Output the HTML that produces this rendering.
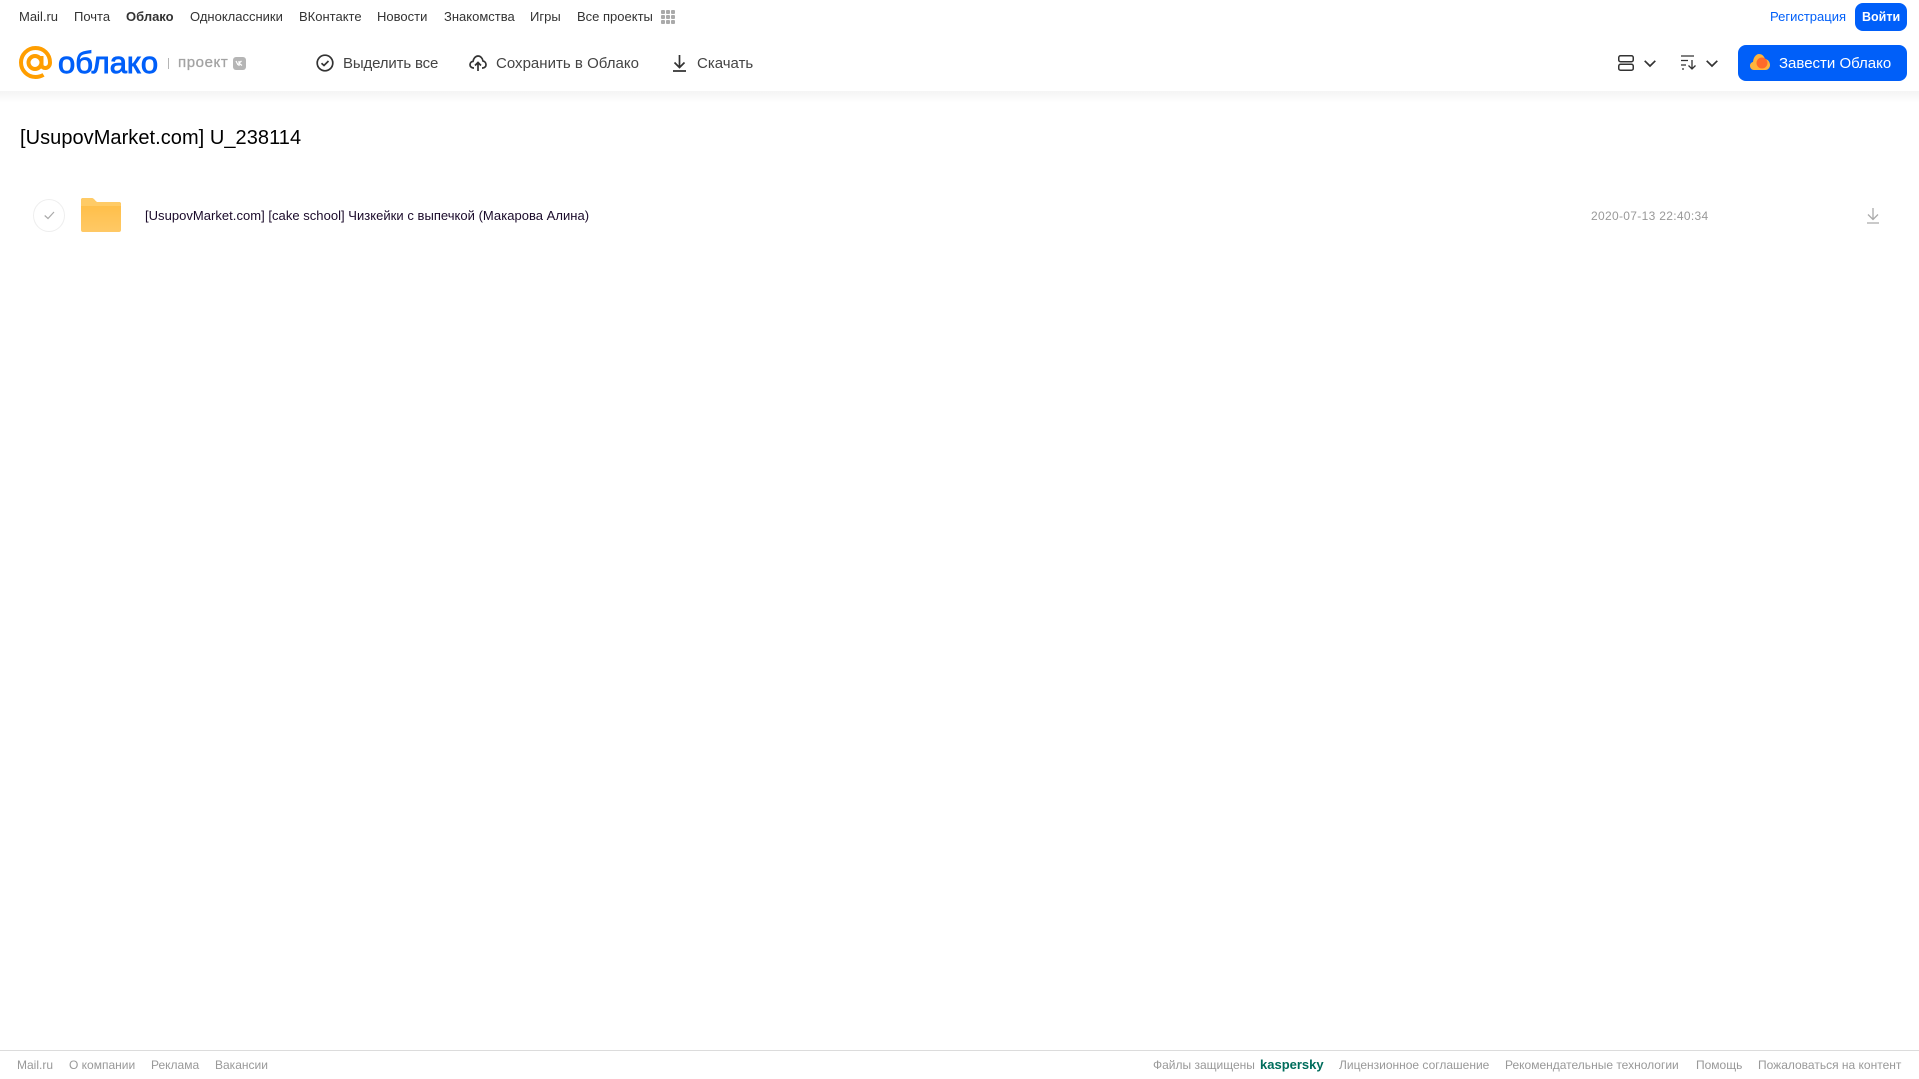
<!DOCTYPE html>
<html lang="ru"><head><meta charset="utf-8"><title>Облако</title>
<style>
html,body{margin:0;padding:0;background:#fff;width:1919px;height:1079px;overflow:hidden;font-family:"Liberation Sans",sans-serif}
.t{position:absolute;white-space:nowrap;line-height:1}
.n{font-size:13px;color:#333;top:10px}
.b{font-size:15px;color:#444;top:56px}
.f{font-size:12px;color:#999;top:1059px}
svg{position:absolute;overflow:visible}
</style></head><body>
<div style="position:absolute;left:0;top:91px;width:1919px;height:12px;background:linear-gradient(#f4f4f4,#fff)"></div>

<span class="t n" style="left:19px">Mail.ru</span>
<span class="t n" style="left:74px">Почта</span>
<span class="t n" style="left:126px;font-weight:bold">Облако</span>
<span class="t n" style="left:190px">Одноклассники</span>
<span class="t n" style="left:299px">ВКонтакте</span>
<span class="t n" style="left:377px">Новости</span>
<span class="t n" style="left:444px">Знакомства</span>
<span class="t n" style="left:530px">Игры</span>
<span class="t n" style="left:577px">Все проекты</span>
<svg style="left:661px;top:10px" width="14" height="14" fill="#aaa"><rect x="0" y="0" width="4" height="4" rx="1"/><rect x="5" y="0" width="4" height="4" rx="1"/><rect x="10" y="0" width="4" height="4" rx="1"/><rect x="0" y="5" width="4" height="4" rx="1"/><rect x="5" y="5" width="4" height="4" rx="1"/><rect x="10" y="5" width="4" height="4" rx="1"/><rect x="0" y="10" width="4" height="4" rx="1"/><rect x="5" y="10" width="4" height="4" rx="1"/><rect x="10" y="10" width="4" height="4" rx="1"/></svg>

<span class="t n" style="left:1770px;color:#005ff9">Регистрация</span>
<div style="position:absolute;left:1855px;top:3px;width:52px;height:28px;background:#005ff9;border-radius:8px"></div>
<span class="t n" style="left:1862px;top:10.500px;color:#fff;font-weight:bold;font-size:12.500px">Войти</span>

<svg style="left:19px;top:46px" width="33" height="33" viewBox="0 0 33 33" fill="none" stroke="#ff9e00" stroke-width="4"><circle cx="16" cy="16.500" r="6.500"/><path d="M22.500 10v8.500c0 5 8.500 5 8.500-2C31 8 24.500 2 16.500 2S2 8.500 2 16.500 8.500 31 16.500 31c3 0 5.500-.7 8-2.200"/></svg>
<span class="t" style="left:58px;top:47px;font-size:31px;color:#005ff9;-webkit-text-stroke:.9px #005ff9">облако</span>
<div style="position:absolute;left:168px;top:58px;width:1px;height:11px;background:#b5b5b5"></div>
<span class="t" style="left:178px;top:55px;font-size:15px;color:#a3a3a3;letter-spacing:.6px;-webkit-text-stroke:.3px #a3a3a3">проект</span>
<div style="position:absolute;left:233px;top:57px;width:13px;height:13px;background:#b5b5b5;border-radius:3px"></div>
<svg style="left:235px;top:60px" width="9" height="7" fill="none" stroke="#fff" stroke-width="1.200"><path d="M1 1l2 4M6.500 1L4 3.200 7 5.500M4 1v5"/></svg>

<svg style="left:316px;top:54px" width="18" height="18" viewBox="0 0 18 18" fill="none" stroke="#333" stroke-width="1.700"><circle cx="9" cy="9" r="7.800"/><path d="M5.500 9.200l2.500 2.300 4.500-4.500"/></svg>
<span class="t b" style="left:343px;letter-spacing:-.15px">Выделить все</span>

<svg style="left:469px;top:55px" width="18" height="17" viewBox="0 0 18 17" fill="none" stroke="#333" stroke-width="1.700"><path d="M5 13H4.500C2.500 13 1 11.500 1 9.700c0-1.700 1.300-3.100 3-3.300C4.500 3.500 6.500 1 9 1s4.500 2.200 5 5c1.700.3 3 1.900 3 3.700 0 1.800-1.400 3.300-3.300 3.300H13"/><path d="M9 16V8M6 10.500L9 7.500l3 3"/></svg>
<span class="t b" style="left:496px;letter-spacing:.02px">Сохранить в Облако</span>

<svg style="left:672px;top:54px" width="15" height="18" viewBox="0 0 15 18" fill="none" stroke="#333" stroke-width="1.700"><path d="M7.500 1v12M2.500 8.500l5 5 5-5M1 17h13"/></svg>
<span class="t b" style="left:697px">Скачать</span>

<svg style="left:1618px;top:55px" width="16" height="16" viewBox="0 0 16 16" fill="none" stroke="#333" stroke-width="1.500"><rect x=".750" y=".750" width="14.500" height="6" rx="1.800"/><rect x=".750" y="9.250" width="14.500" height="6" rx="1.800"/></svg>
<svg style="left:1644px;top:60px" width="12" height="7" fill="none" stroke="#333" stroke-width="1.700"><path d="M.700.800L6 6l5.300-5.200"/></svg>
<svg style="left:1681px;top:55px" width="16" height="15" viewBox="0 0 16 15" fill="none" stroke="#333" stroke-width="1.300"><path d="M0 1h13M0 5.500h7M0 10h5M1 14h2M11 5v9M7.500 10.500l3.500 3.500 3.500-3.500"/></svg>
<svg style="left:1706px;top:60px" width="12" height="7" fill="none" stroke="#333" stroke-width="1.700"><path d="M.700.800L6 6l5.300-5.200"/></svg>

<div style="position:absolute;left:1738px;top:45px;width:169px;height:36px;background:#005ff9;border-radius:8px"></div>
<svg style="left:1750px;top:54px" width="20" height="16" viewBox="0 0 20 16"><path d="M4 16C1.500 16 0 14 0 11.800 0 9.800 1.300 8.300 3 8 3.300 3.500 6 0 9 0c3 0 5 2 6 5 3 .4 5 3 5 6 0 2.800-2 5-4.500 5z" fill="#ffb43c"/><circle cx="12" cy="9" r="5.500" fill="#ff6a2a"/></svg>
<span class="t b" style="left:1779px;color:#fff">Завести Облако</span>

<span class="t" style="left:20px;top:128px;font-size:20px;color:#000;letter-spacing:.05px">[UsupovMarket.com] U_238114</span>

<div style="position:absolute;left:33px;top:199px;width:30px;height:31px;border:1px solid #eee;border-radius:50%"></div>
<svg style="left:44px;top:211px" width="11" height="9" fill="none" stroke="#aaa" stroke-width="1.200"><path d="M.700 4.500L4 7.500 10 1"/></svg>
<svg style="left:81px;top:198px" width="40" height="34" viewBox="0 0 40 34"><defs><linearGradient id="g" x1="0" y1="0" x2="0" y2="1"><stop offset="0" stop-color="#ffbc42"/><stop offset="1" stop-color="#ffc966"/></linearGradient></defs><path d="M2 0h8c2 0 3 1 4 2.200S15.500 4 17 4h21c1.200 0 2 .8 2 2v26c0 1.200-.8 2-2 2H2c-1.200 0-2-.8-2-2V2C0 .8.800 0 2 0z" fill="url(#g)"/><path d="M0 8h40V6c0-1.200-.8-2-2-2H17c-1.500 0-2-.6-3-1.800S12 0 10 0H2C.8 0 0 .8 0 2z" fill="#ffcb66"/></svg>
<span class="t" style="left:145px;top:209px;font-size:13px;color:#1a0a2a;letter-spacing:.03px">[UsupovMarket.com] [cake school] Чизкейки с выпечкой (Макарова Алина)</span>
<span class="t" style="left:1591px;top:209.500px;font-size:12px;color:#999;letter-spacing:.32px">2020-07-13 22:40:34</span>
<svg style="left:1866px;top:207px" width="14" height="17" viewBox="0 0 14 17" fill="none" stroke="#aaa" stroke-width="1.300"><path d="M7 1v11M2 7.500l5 5 5-5M1 16h12"/></svg>

<div style="position:absolute;left:0;top:1050px;width:1919px;height:1px;background:#dcdcdc"></div>
<span class="t f" style="left:17px">Mail.ru</span>
<span class="t f" style="left:69px">О компании</span>
<span class="t f" style="left:151px">Реклама</span>
<span class="t f" style="left:215px">Вакансии</span>
<span class="t f" style="left:1153px">Файлы защищены</span>
<span class="t f" style="left:1260px;color:#006d5c;font-weight:bold;font-size:13px;top:1058px">kaspersky</span>
<span class="t f" style="left:1339px">Лицензионное соглашение</span>
<span class="t f" style="left:1505px">Рекомендательные технологии</span>
<span class="t f" style="left:1696px">Помощь</span>
<span class="t f" style="left:1758px">Пожаловаться на контент</span>
</body></html>
